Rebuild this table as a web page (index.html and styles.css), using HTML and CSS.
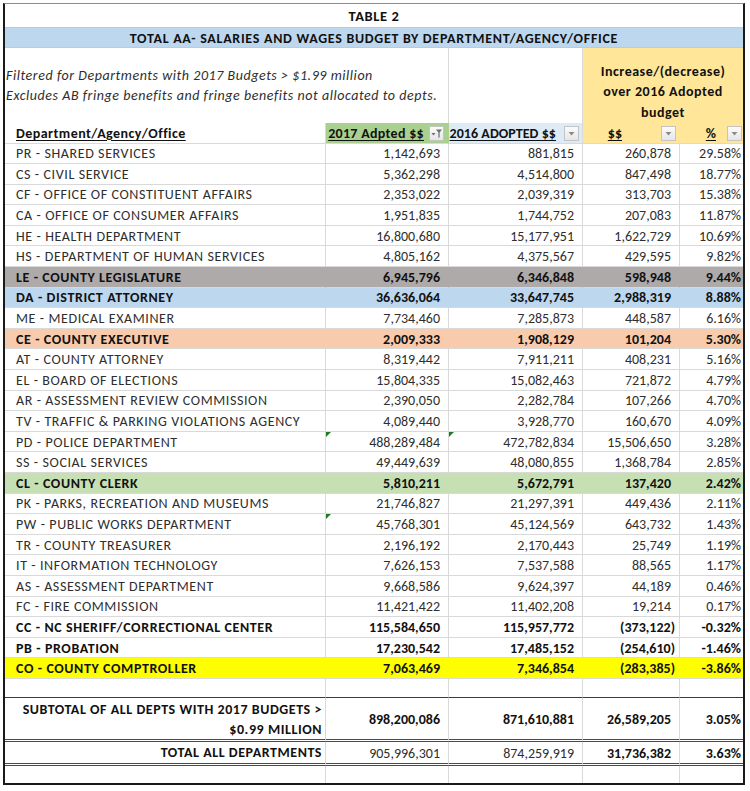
FILE: index.html
```html
<!DOCTYPE html>
<html>
<head>
<meta charset="utf-8">
<title>Table 2</title>
<link rel="stylesheet" href="styles.css">
</head>
<body>
<div class="sheet">
  <div class="title">TABLE 2</div>
  <div class="banner">TOTAL AA- SALARIES AND WAGES BUDGET BY DEPARTMENT/AGENCY/OFFICE</div>
  <div class="notes"><span>Filtered for Departments with 2017 Budgets &gt; $1.99 million</span><span>Excludes AB fringe benefits and fringe benefits not allocated to depts.</span></div>
  <div class="notes-c"></div>
  <div class="change">Increase/(decrease)<br>over 2016 Adopted<br>budget</div>

  <div class="row head">
    <div class="a"><u>Department/Agency/Office</u></div>
    <div class="hb"><u>2017 Adpted $$</u><span class="btn"><svg width="13" height="13" viewBox="0 0 13 13"><polygon points="1.5,6 5.5,6 3.5,8.5" fill="#6d6d6d"/><polygon points="6,2.5 12,2.5 9.6,5.6 9.6,10.5 8.4,10.5 8.4,5.6" fill="#6d6d6d"/></svg></span></div>
    <div class="hc"><u>2016 ADOPTED $$</u><span class="btn"><svg width="13" height="13" viewBox="0 0 13 13"><polygon points="3.5,5 9.5,5 6.5,8.5" fill="#8a8a8a"/></svg></span></div>
    <div class="hd"><u>$$</u><span class="btn"><svg width="13" height="13" viewBox="0 0 13 13"><polygon points="3.5,5 9.5,5 6.5,8.5" fill="#8a8a8a"/></svg></span></div>
    <div class="he"><u>%</u><span class="btn"><svg width="13" height="13" viewBox="0 0 13 13"><polygon points="3.5,5 9.5,5 6.5,8.5" fill="#8a8a8a"/></svg></span></div>
  </div>

  <div class="row"><div class="a">PR - SHARED SERVICES</div><div class="n">1,142,693</div><div class="n">881,815</div><div class="n">260,878</div><div class="p">29.58%</div></div>
  <div class="row"><div class="a">CS - CIVIL SERVICE</div><div class="n">5,362,298</div><div class="n">4,514,800</div><div class="n">847,498</div><div class="p">18.77%</div></div>
  <div class="row"><div class="a">CF - OFFICE OF CONSTITUENT AFFAIRS</div><div class="n">2,353,022</div><div class="n">2,039,319</div><div class="n">313,703</div><div class="p">15.38%</div></div>
  <div class="row"><div class="a">CA - OFFICE OF CONSUMER AFFAIRS</div><div class="n">1,951,835</div><div class="n">1,744,752</div><div class="n">207,083</div><div class="p">11.87%</div></div>
  <div class="row"><div class="a">HE - HEALTH DEPARTMENT</div><div class="n">16,800,680</div><div class="n">15,177,951</div><div class="n">1,622,729</div><div class="p">10.69%</div></div>
  <div class="row"><div class="a">HS - DEPARTMENT OF HUMAN SERVICES</div><div class="n">4,805,162</div><div class="n">4,375,567</div><div class="n">429,595</div><div class="p">9.82%</div></div>
  <div class="row bold fill-grey"><div class="a">LE - COUNTY LEGISLATURE</div><div class="n">6,945,796</div><div class="n">6,346,848</div><div class="n">598,948</div><div class="p">9.44%</div></div>
  <div class="row bold fill-blue"><div class="a">DA - DISTRICT ATTORNEY</div><div class="n">36,636,064</div><div class="n">33,647,745</div><div class="n">2,988,319</div><div class="p">8.88%</div></div>
  <div class="row"><div class="a">ME - MEDICAL EXAMINER</div><div class="n">7,734,460</div><div class="n">7,285,873</div><div class="n">448,587</div><div class="p">6.16%</div></div>
  <div class="row bold fill-orange"><div class="a">CE - COUNTY EXECUTIVE</div><div class="n">2,009,333</div><div class="n">1,908,129</div><div class="n">101,204</div><div class="p">5.30%</div></div>
  <div class="row"><div class="a">AT - COUNTY ATTORNEY</div><div class="n">8,319,442</div><div class="n">7,911,211</div><div class="n">408,231</div><div class="p">5.16%</div></div>
  <div class="row"><div class="a">EL - BOARD OF ELECTIONS</div><div class="n">15,804,335</div><div class="n">15,082,463</div><div class="n">721,872</div><div class="p">4.79%</div></div>
  <div class="row"><div class="a">AR - ASSESSMENT REVIEW COMMISSION</div><div class="n">2,390,050</div><div class="n">2,282,784</div><div class="n">107,266</div><div class="p">4.70%</div></div>
  <div class="row"><div class="a">TV - TRAFFIC &amp; PARKING VIOLATIONS AGENCY</div><div class="n">4,089,440</div><div class="n">3,928,770</div><div class="n">160,670</div><div class="p">4.09%</div></div>
  <div class="row"><div class="a">PD - POLICE DEPARTMENT</div><div class="n flag">488,289,484</div><div class="n flag">472,782,834</div><div class="n">15,506,650</div><div class="p">3.28%</div></div>
  <div class="row"><div class="a">SS - SOCIAL SERVICES</div><div class="n">49,449,639</div><div class="n">48,080,855</div><div class="n">1,368,784</div><div class="p">2.85%</div></div>
  <div class="row bold fill-green"><div class="a">CL - COUNTY CLERK</div><div class="n">5,810,211</div><div class="n">5,672,791</div><div class="n">137,420</div><div class="p">2.42%</div></div>
  <div class="row"><div class="a">PK - PARKS, RECREATION AND MUSEUMS</div><div class="n">21,746,827</div><div class="n">21,297,391</div><div class="n">449,436</div><div class="p">2.11%</div></div>
  <div class="row"><div class="a">PW - PUBLIC WORKS DEPARTMENT</div><div class="n flag">45,768,301</div><div class="n">45,124,569</div><div class="n">643,732</div><div class="p">1.43%</div></div>
  <div class="row"><div class="a">TR - COUNTY TREASURER</div><div class="n">2,196,192</div><div class="n">2,170,443</div><div class="n">25,749</div><div class="p">1.19%</div></div>
  <div class="row"><div class="a">IT - INFORMATION TECHNOLOGY</div><div class="n">7,626,153</div><div class="n">7,537,588</div><div class="n">88,565</div><div class="p">1.17%</div></div>
  <div class="row"><div class="a">AS - ASSESSMENT DEPARTMENT</div><div class="n">9,668,586</div><div class="n">9,624,397</div><div class="n">44,189</div><div class="p">0.46%</div></div>
  <div class="row"><div class="a">FC - FIRE COMMISSION</div><div class="n">11,421,422</div><div class="n">11,402,208</div><div class="n">19,214</div><div class="p">0.17%</div></div>
  <div class="row bold"><div class="a">CC - NC SHERIFF/CORRECTIONAL CENTER</div><div class="n">115,584,650</div><div class="n">115,957,772</div><div class="n neg">(373,122)</div><div class="p">-0.32%</div></div>
  <div class="row bold"><div class="a">PB - PROBATION</div><div class="n">17,230,542</div><div class="n">17,485,152</div><div class="n neg">(254,610)</div><div class="p">-1.46%</div></div>
  <div class="row bold fill-yellow"><div class="a">CO - COUNTY COMPTROLLER</div><div class="n">7,063,469</div><div class="n">7,346,854</div><div class="n neg">(283,385)</div><div class="p">-3.86%</div></div>

  <div class="row spacer"><div></div><div></div><div></div><div></div><div></div></div>
  <div class="row subtotal bold"><div class="lbl">SUBTOTAL OF ALL DEPTS WITH 2017 BUDGETS &gt;<br>$0.99 MILLION</div><div class="n">898,200,086</div><div class="n">871,610,881</div><div class="n">26,589,205</div><div class="p">3.05%</div></div>
  <div class="row total"><div class="lbl bold">TOTAL ALL DEPARTMENTS</div><div class="n">905,996,301</div><div class="n">874,259,919</div><div class="n bold">31,736,382</div><div class="p bold">3.63%</div></div>
  <div class="row tail"><div></div><div></div><div></div><div></div><div></div></div>
</div>
</body>
</html>
```
FILE: styles.css
```css
* { box-sizing: border-box; }

html, body {
  margin: 0;
  padding: 0;
  background: #ffffff;
}

body {
  font-family: Carlito, Lato, "Liberation Sans", sans-serif;
  font-size: 14px;
  color: #2e2e2e;
}

.sheet {
  margin: 3px 0 0 3px;
  width: 742px;
  display: grid;
  grid-template-columns: 321px 123px 134px 97px 63px;
  border: 2px solid #1a1a1a;
  border-top: 1px solid #8c8c8c;
}

.row { display: contents; }

.row > div {
  height: 20.6px;
  display: flex;
  align-items: center;
  padding-top: 1px;
  white-space: nowrap;
  border-right: 1px solid #d9d9d9;
  border-bottom: 1px solid #d9d9d9;
  position: relative;
}

.row > div:last-child { border-right: none; }

.title {
  grid-column: 1 / -1;
  height: 24px;
  display: flex;
  align-items: center;
  justify-content: center;
  font-weight: bold;
  font-size: 14.5px;
  letter-spacing: 0.6px;
  color: #111;
  border-bottom: 1px solid #c8c8c8;
}

.banner {
  grid-column: 1 / -1;
  height: 20px;
  display: flex;
  align-items: center;
  justify-content: center;
  padding-top: 1px;
  font-weight: bold;
  letter-spacing: 0.7px;
  color: #111;
  background: #bdd7ee;
  border-bottom: 1px solid #c8c8c8;
}

.notes {
  grid-column: 1 / 3;
  height: 75px;
  display: flex;
  flex-direction: column;
  justify-content: center;
  padding-left: 1px;
  padding-top: 1px;
  font-style: italic;
  letter-spacing: 0.55px;
  line-height: 20px;
  white-space: nowrap;
  border-right: 1px solid #d9d9d9;
}

.notes-c {
  height: 75px;
  border-right: 1px solid #d9d9d9;
}

.change {
  grid-column: 4 / 6;
  height: 75px;
  display: flex;
  align-items: flex-end;
  justify-content: center;
  text-align: center;
  padding-bottom: 0;
  line-height: 20.5px;
  letter-spacing: 0.5px;
  font-weight: bold;
  color: #111;
  background: #ffe699;
}

.row.head > div { height: 20.5px; font-weight: bold; color: #111; }

.head u { text-decoration-thickness: 1px; text-underline-offset: 2px; }

.head .a { letter-spacing: 0.45px; }

.head .hb {
  background: #a9d08e;
  justify-content: flex-end;
  padding-right: 4px;
  gap: 5px;
  letter-spacing: 0.3px;
  border-right-color: transparent;
}

.head .hc {
  background: #ddebf7;
  justify-content: flex-end;
  padding-right: 3px;
  gap: 8px;
  letter-spacing: 0.05px;
  border-right-color: #d9d9d9;
}

.head .hd {
  background: #ffe699;
  justify-content: flex-end;
  padding-right: 3px;
  gap: 39px;
  border-right-color: transparent;
}

.head .he {
  background: #ffe699;
  justify-content: flex-end;
  padding-right: 1px;
  gap: 11px;
}

.btn {
  width: 15px;
  height: 15px;
  flex: none;
  display: flex;
  align-items: center;
  justify-content: center;
  background: linear-gradient(#fbfbfb, #e6e6e6);
  border: 1px solid #c4c4c4;
}

.a { padding-left: 11px; letter-spacing: 0.6px; }

.n { justify-content: flex-end; padding-right: 8px; }
.n.neg { padding-right: 4px; }
.p { justify-content: flex-end; padding-right: 2px; }

.bold, .bold > div { font-weight: bold; color: #111; }

.fill-grey > div { background: #aeaaaa; border-right-color: transparent; }
.fill-blue > div { background: #bdd7ee; border-right-color: transparent; }
.fill-orange > div { background: #f8cbad; border-right-color: transparent; }
.fill-green > div { background: #c6e0b4; border-right-color: transparent; }
.fill-yellow > div { background: #ffff00; border-right-color: transparent; }

.flag::before {
  content: "";
  position: absolute;
  left: 0;
  top: 0;
  border-top: 5px solid #1e7b1e;
  border-right: 5px solid transparent;
}

.row.spacer > div { height: 19px; border-bottom: 1px solid #3a3a3a; }

.row.subtotal > div {
  height: 44px;
  padding-top: 3px;
  border-bottom: 3px double #4a4a4a;
}

.lbl {
  justify-content: flex-end;
  text-align: right;
  padding-right: 3px;
  line-height: 20px;
  letter-spacing: 0.55px;
}

.row.total > div {
  height: 24px;
  padding-top: 2px;
  border-bottom: 3px double #4a4a4a;
}

.row.tail > div { height: 17px; border-bottom: none; }
```
